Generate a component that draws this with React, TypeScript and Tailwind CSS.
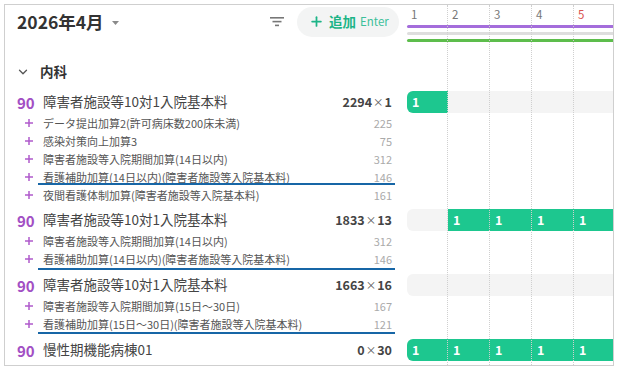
import React from 'react';
import { Plus, ChevronDown } from 'lucide-react';

type Sub = { t: string; v: string; line?: string };
type Group = { name: string; value: string; mult: string; bars: string[]; pb: string; subs: Sub[] };

const groups: Group[] = [
  {
    name: '障害者施設等10対1入院基本料',
    value: '2294',
    mult: '1',
    bars: ['g', 'e', 'e', 'e', 'e'],
    pb: 'pb-[4px]',
    subs: [
      { t: 'データ提出加算2(許可病床数200床未満)', v: '225' },
      { t: '感染対策向上加算3', v: '75' },
      { t: '障害者施設等入院期間加算(14日以内)', v: '312' },
      { t: '看護補助加算(14日以内)(障害者施設等入院基本料)', v: '146', line: 'bottom-[1px]' },
      { t: '夜間看護体制加算(障害者施設等入院基本料)', v: '161' },
    ],
  },
  {
    name: '障害者施設等10対1入院基本料',
    value: '1833',
    mult: '13',
    bars: ['e', 'g', 'g', 'g', 'g'],
    pb: 'pb-[5px]',
    subs: [
      { t: '障害者施設等入院期間加算(14日以内)', v: '312' },
      { t: '看護補助加算(14日以内)(障害者施設等入院基本料)', v: '146', line: 'bottom-[-2px]' },
    ],
  },
  {
    name: '障害者施設等10対1入院基本料',
    value: '1663',
    mult: '16',
    bars: ['e', 'e', 'e', 'e', 'e'],
    pb: 'pb-[5px]',
    subs: [
      { t: '障害者施設等入院期間加算(15日～30日)', v: '167' },
      { t: '看護補助加算(15日～30日)(障害者施設等入院基本料)', v: '121', line: 'bottom-[-1px]' },
    ],
  },
  {
    name: '慢性期機能病棟01',
    value: '0',
    mult: '30',
    bars: ['g', 'g', 'g', 'g', 'g'],
    pb: 'pb-0',
    subs: [],
  },
];

const days = ['1', '2', '3', '4', '5'];

function Bars({ bars }: { bars: string[] }) {
  return (
    <div className="ml-px flex h-[22px] w-[230px] shrink-0 overflow-hidden rounded-l-[6px] bg-[#f4f4f4]">
      {bars.map((b, i) => (
        <div
          key={i}
          className={`${i === 0 ? 'w-[41px]' : 'w-[42px]'} flex shrink-0 items-center pl-[5px] text-[12.5px] font-bold ${
            b === 'g' ? 'bg-[#1dc78f] text-white' : ''
          }`}
        >
          {b === 'g' ? '1' : ''}
        </div>
      ))}
    </div>
  );
}

function SmallPlus() {
  return (
    <svg width="8" height="8" viewBox="0 0 8 8">
      <rect x="0" y="3.25" width="8" height="1.5" fill="#b05bcb" />
      <rect x="3.25" y="0" width="1.5" height="8" fill="#b05bcb" />
    </svg>
  );
}

export default function App() {
  return (
    <div className="h-[373px] w-[621px] bg-white p-1 font-['Noto_Sans_CJK_JP','Noto_Sans',sans-serif]">
      <div className="relative flex h-[362px] w-[610px] flex-col overflow-hidden border border-[#cfcfcf]">
        {/* header */}
        <div className="flex h-[41px] shrink-0">
          <div className="flex h-[33px] w-[401px] shrink-0 items-center pl-3 pr-[7px]">
            <span className="text-[17.5px] font-bold leading-none text-[#333]">2026年4月</span>
            <svg width="7" height="4" viewBox="0 0 7 4" className="ml-[8px] mt-[2px]">
              <path d="M0 0 L7 0 L3.5 4 Z" fill="#8a8a8a" />
            </svg>
            <div className="flex-1" />
            <svg width="14" height="10" viewBox="0 0 14 10" className="mr-[13px] mt-[1px]">
              <rect x="0" y="0" width="14" height="1.6" fill="#777" />
              <rect x="2.5" y="3.8" width="9" height="1.6" fill="#777" />
              <rect x="5" y="7.6" width="4" height="1.6" fill="#777" />
            </svg>
            <div className="flex h-[30px] w-[102px] items-center rounded-full bg-[#f3f4f4] pl-[12px]">
              <Plus size={15} strokeWidth={2.8} color="#1db487" />
              <span className="ml-[5px] text-[13.5px] font-bold leading-none text-[#1db487]">追加</span>
              <span className="ml-[4px] text-[11.5px] leading-none text-[#3cc09a]">Enter</span>
            </div>
          </div>
          <div className="flex flex-1 flex-col">
            <div className="flex h-[19px] items-center pl-px text-[11.5px] leading-none text-[#777]">
              {days.map((d, i) => (
                <div
                  key={d}
                  className={`${i === 0 ? 'w-[41px]' : 'w-[42px]'} shrink-0 pl-[4px] ${i === 4 ? 'text-[#d9534f]' : ''}`}
                >
                  {d}
                </div>
              ))}
            </div>
            <div className="ml-px mt-px h-[3px] w-[230px] rounded-l-full bg-[#a46ddb]" />
            <div className="ml-px mt-[4px] h-[3px] w-[230px] rounded-l-full bg-[#dedede]" />
            <div className="ml-px mt-[4px] h-[3px] w-[230px] rounded-l-full bg-[#5dbd4c]" />
          </div>
        </div>

        {/* section */}
        <div className="flex h-[44px] shrink-0 items-center pl-3 pt-[8px]">
          <ChevronDown size={14} strokeWidth={2.2} color="#555" className="-ml-[1px]" />
          <span className="ml-[10px] text-[13.5px] font-bold leading-none text-[#333]">内科</span>
        </div>

        {/* groups */}
        {groups.map((g, gi) => (
          <div key={gi} className={`flex shrink-0 flex-col ${g.pb}`}>
            <div className="flex h-[24px] items-center">
              <div className="flex w-[401px] shrink-0 items-center pl-3 pr-[14px]">
                <span className="w-[26px] shrink-0 text-[15px] font-semibold leading-none text-[#a24fc4]">90</span>
                <span className="flex-1 text-[13.5px] leading-none text-[#444]">{g.name}</span>
                <span className="flex items-center text-[12.5px] font-semibold leading-none text-[#444]">
                  {g.value}
                  <span className="mx-[1px] text-[10.5px] font-normal text-[#555]">×</span>
                  {g.mult}
                </span>
              </div>
              <Bars bars={g.bars} />
            </div>
            {g.subs.map((s, si) => (
              <div key={si} className="relative flex h-[18px] w-[401px] items-center pl-3 pr-[14px]">
                <span className="flex w-[26px] shrink-0 pl-[8px]">
                  <SmallPlus />
                </span>
                <span className="flex-1 text-[11px] leading-none text-[#555]">{s.t}</span>
                <span className="text-[11px] leading-none text-[#aaa]">{s.v}</span>
                {s.line ? (
                  <div className={`absolute left-[33px] h-[2.5px] w-[357px] bg-[#1766a6] ${s.line}`} />
                ) : null}
              </div>
            ))}
          </div>
        ))}

        {/* dotted day lines */}
        <div className="pointer-events-none absolute bottom-0 left-[401px] top-0 flex">
          {days.map((d) => (
            <div key={d} className="h-full w-[42px] shrink-0 border-r border-dotted border-[#cfcfcf]" />
          ))}
        </div>
      </div>
    </div>
  );
}
